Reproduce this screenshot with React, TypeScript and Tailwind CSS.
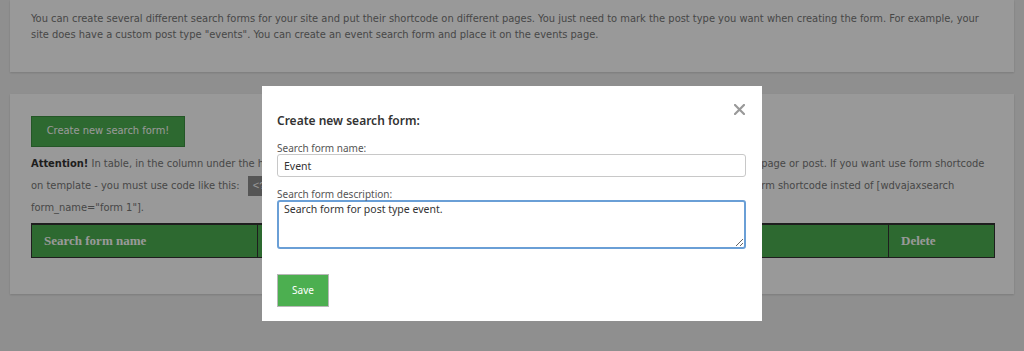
import React, { useEffect, useRef } from 'react';

const bodyFont = "font-['DejaVu_Sans_Condensed','DejaVu_Sans',sans-serif]";

const App: React.FC = () => {
  const descRef = useRef<HTMLTextAreaElement>(null);

  // put the caret after the text, as in a form being filled in
  useEffect(() => {
    const el = descRef.current;
    if (el) {
      el.focus();
      el.setSelectionRange(el.value.length, el.value.length);
    }
  }, []);

  return (
    <div className={`relative h-[351px] w-[1024px] overflow-hidden bg-[#efefef] ${bodyFont}`}>
      <div className="flex flex-col gap-[22px] px-[10px]">
        {/* Intro card */}
        <div className="bg-white px-[21px] pb-[29px] pt-[11px] text-[11px] leading-[16px] text-[#777] shadow-[0_1px_2px_rgba(0,0,0,0.15)]">
          You can create several different search forms for your site and put their shortcode on different pages. You just need to mark the post type you want when creating the form. For example, your site does have a custom post type "events". You can create an event search form and place it on the events page.
        </div>

        {/* Forms card */}
        <div className="bg-white px-[21px] pb-[36px] pt-[22px] shadow-[0_1px_2px_rgba(0,0,0,0.15)]">
          <button className="h-[31px] w-[154px] border border-[#3d8f41] bg-[#4caf50] text-[11px] text-white">
            Create new search form!
          </button>

          <p className="mt-[6px] text-[11px] leading-[21.5px] text-[#777]">
            <b className="text-[#333]">Attention!</b> In table, in the column under the heading "Shortcode" you can easily copy the shortcode of your search form and then paste it on any page or post. If you want use form shortcode
            <br />
            on template - you must use code like this:{' '}
            <code className="ml-[5px] bg-[#8e8e8e] px-[5px] py-[4px] text-white">&lt;?php echo do_shortcode('[wdvajaxsearch form_name="form 1"]' ); ?&gt;</code>{' '}
            Paste your form shortcode insted of [wdvajaxsearch
            <br />
            form_name="form 1"].
          </p>

          <table className="mt-[4px] w-[964px] border-collapse font-['Liberation_Serif',serif] text-[13px] text-white">
            <thead>
              <tr className="h-[34px] bg-[#4caf50]">
                <th className="w-[226px] border border-t-2 border-[#333] pl-[12px] text-left font-bold">Search form name</th>
                <th className="w-[263px] border border-t-2 border-[#333] pl-[12px] text-left font-bold">Search form description</th>
                <th className="w-[368px] border border-t-2 border-[#333] pl-[12px] text-left font-bold">Shortcode</th>
                <th className="border border-t-2 border-[#333] pl-[12px] text-left font-bold">Delete</th>
              </tr>
            </thead>
          </table>
        </div>
      </div>

      {/* Dim overlay */}
      <div className="absolute inset-0 bg-black/40" />

      {/* Modal */}
      <div className="absolute left-[262px] top-[86px] h-[235px] w-[500px] bg-white px-[15px] pt-[27px] font-['Noto_Sans',sans-serif]">
        <button className="absolute right-[17px] top-[18px] text-[#999]">
          <svg width="11" height="11" viewBox="0 0 11 11">
            <path d="M1 1 L10 10 M10 1 L1 10" stroke="currentColor" strokeWidth="2.2" strokeLinecap="square" />
          </svg>
        </button>

        <h3 className="text-[12px] font-semibold leading-[16px] text-[#333]">Create new search form:</h3>

        <label className="mt-[13px] block text-[10px] leading-[12px] text-[#555]">Search form name:</label>
        <input
          defaultValue="Event"
          className="block h-[23px] w-[469px] rounded-[3px] border border-[#c8c8c8] px-[6px] text-[10.5px] text-[#333] outline-none"
        />

        <label className="mt-[11px] block text-[10px] leading-[12px] text-[#555]">Search form description:</label>
        <textarea
          ref={descRef}
          defaultValue="Search form for post type event."
          className="block h-[49px] w-[469px] rounded-[3px] border-2 border-[#6a9fd6] px-[5px] py-0 text-[10.5px] leading-[14px] text-[#333] outline-none"
        />

        <button className="mt-[25px] h-[33px] w-[52px] border border-[#b8b8b8] bg-[#4caf50] text-[10px] text-white">
          Save
        </button>
      </div>
    </div>
  );
};

export default App;
